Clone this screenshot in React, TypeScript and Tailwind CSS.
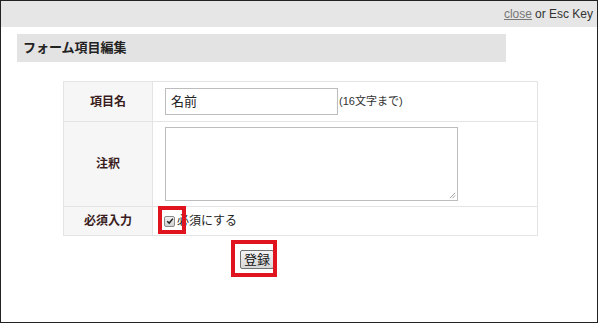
import React from 'react';

const font = { fontFamily: '"Liberation Sans", "Noto Sans CJK JP", sans-serif' };

function FakeCheckbox() {
  return (
    <span className="inline-flex h-[11px] w-[11px] items-center justify-center rounded-[2px] border border-[#8a8a8a] bg-gradient-to-b from-[#f0f0f0] to-[#cfcfcf]">
      <svg viewBox="0 0 10 10" className="h-[8px] w-[8px]">
        <path d="M1.5 5.2 L4 7.6 L8.6 2" fill="none" stroke="#222" strokeWidth="1.8" />
      </svg>
    </span>
  );
}

export default function App() {
  return (
    <div className="relative h-[323px] w-[598px] overflow-hidden border border-[#222] bg-white text-[#333]" style={font}>
      <div className="flex h-[26px] items-center justify-end bg-[#e6e6e6] pr-[4px] text-[12px] text-[#333]">
        <span className="text-[#777] underline">close</span>
        <span className="ml-[3px]">or Esc Key</span>
      </div>

      <div className="ml-[16px] mt-[7px] flex h-[28px] w-[489px] items-center bg-[#e3e3e3] pl-[6px] text-[13px] font-bold text-[#222]">
        フォーム項目編集
      </div>

      <table className="ml-[62px] mt-[19px] w-[475px] border-collapse text-[12px]">
        <tbody>
          <tr className="h-[40px]">
            <th className="w-[89px] border border-[#e4e4e4] bg-[#f6f6f6] text-center font-bold text-[#3a1c1c]">項目名</th>
            <td className="border border-[#e4e4e4] pl-[12px]">
              <div className="flex items-center">
                <div className="flex h-[27px] w-[173px] items-center border border-[#bdbdbd] pl-[5px] text-[13px] text-[#222]">名前</div>
                <span className="ml-[1px] text-[11px] text-[#333]">(16文字まで)</span>
              </div>
            </td>
          </tr>
          <tr className="h-[85px]">
            <th className="border border-[#e4e4e4] bg-[#f6f6f6] text-center font-bold text-[#3a1c1c]">注釈</th>
            <td className="border border-[#e4e4e4] pl-[12px]">
              <div className="relative h-[74px] w-[293px] border border-[#bdbdbd] bg-white">
                <svg viewBox="0 0 8 8" className="absolute bottom-[1px] right-[1px] h-[7px] w-[7px]">
                  <path d="M7 1 L1 7 M7 4 L4 7" stroke="#999" strokeWidth="1" />
                </svg>
              </div>
            </td>
          </tr>
          <tr className="h-[29px]">
            <th className="border border-[#e4e4e4] bg-[#f6f6f6] text-center font-bold text-[#3a1c1c]">必須入力</th>
            <td className="border border-[#e4e4e4] pl-[11px]">
              <div className="flex items-center gap-[2px] text-[12px] text-[#222]">
                <FakeCheckbox />
                <span>必須にする</span>
              </div>
            </td>
          </tr>
        </tbody>
      </table>

      <div className="ml-[239px] mt-[14px] flex">
        <span className="flex h-[19px] items-center rounded-[2px] border border-[#707070] bg-gradient-to-b from-[#f2f2f2] to-[#d8d8d8] px-[3px] text-[13px] text-[#111]">
          登録
        </span>
      </div>

      {/* red annotation boxes */}
      <div className="absolute left-[157px] top-[205px] h-[28px] w-[28px] border-[4px] border-[#e0141e]" />
      <div className="absolute left-[230px] top-[239px] h-[37px] w-[46px] border-[4px] border-[#e0141e]" />
    </div>
  );
}
